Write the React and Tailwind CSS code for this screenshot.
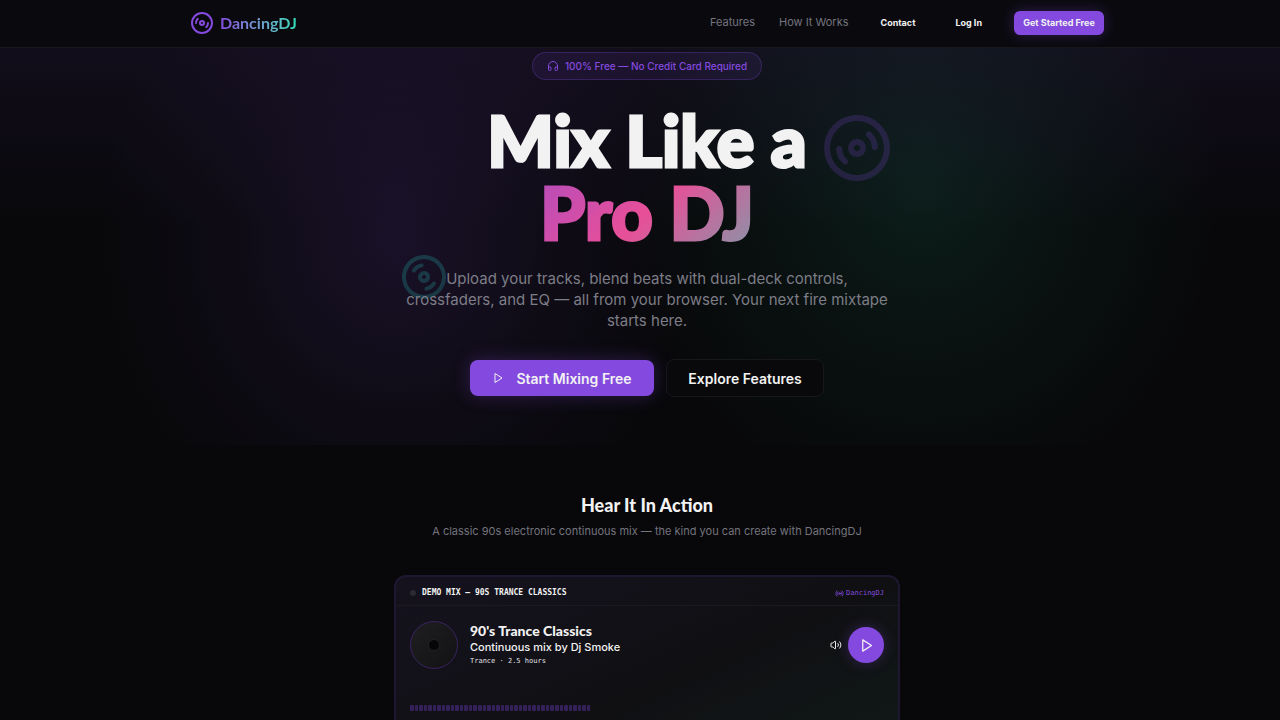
import React, { useState } from "react";
import { Disc3, Headphones, Radio, Volume2 } from "lucide-react";

const navLinks = [
  { label: "Features", href: "#features" },
  { label: "How It Works", href: "#how-it-works" },
];

const bars = Array.from({ length: 40 }, (_, i) => i);

const PlayIcon = ({ size }) => (
  <svg
    width={size}
    height={size}
    viewBox="0 0 24 24"
    fill="none"
    stroke="currentColor"
    strokeWidth="2"
    strokeLinejoin="round"
    aria-hidden="true"
  >
    <polygon points="6 3 20 12 6 21 6 3" />
  </svg>
);

const Navbar = () => (
  <header className="h-12 pb-0.5 pl-[14px] border-b border-[#18181b] bg-[#0a0a0e]">
    <div className="h-full max-w-[914px] mx-auto flex items-center justify-between">
      <a href="#" className="flex items-center gap-1.5">
        <Disc3 size={24} className="text-[#844adf]" />
        <span className="font-['Lato',sans-serif] text-[16px] font-bold leading-5 bg-linear-to-r from-[#844adf] to-[#2adbb8] bg-clip-text text-transparent">
          DancingDJ
        </span>
      </a>
      <nav className="flex items-center text-[9px] font-bold text-[#f2f2f2]">
        <div className="flex items-center gap-6 mr-8 text-[11px] font-normal text-[#74747e]">
          {navLinks.map((link) => (
            <a key={link.label} href={link.href}>
              {link.label}
            </a>
          ))}
        </div>
        <a href="#contact" className="mr-10">
          Contact
        </a>
        <a href="#login" className="mr-8">
          Log In
        </a>
        <a
          href="#signup"
          className="h-6 w-[90px] flex items-center justify-center rounded-md bg-[#844adf] shadow-[0_0_14px_rgba(132,74,223,0.3)]"
        >
          Get Started Free
        </a>
      </nav>
    </div>
  </header>
);

const Hero = () => (
  <section className="relative pt-1 pb-12 pl-[14px] bg-[radial-gradient(ellipse_300px_330px_at_31%_48%,rgba(132,74,223,0.14),rgba(132,74,223,0.05)_55%,transparent),radial-gradient(ellipse_300px_320px_at_72%_36%,rgba(42,219,160,0.1),rgba(42,219,160,0.04)_55%,transparent),linear-gradient(to_bottom,rgba(132,74,223,0.08),transparent_45%)]">
    <div className="relative max-w-[504px] mx-auto flex flex-col items-center text-center">
      {/* Floating discs */}
      <Disc3
        size={72}
        className="absolute right-[6px] top-[60px] rotate-[-48deg] text-[#844adf] opacity-20"
      />
      <Disc3
        size={48}
        className="absolute left-[5px] top-[201px] rotate-[33deg] text-[#2adbd0] opacity-20"
      />

      <div className="h-7 px-3.5 flex items-center gap-1.5 rounded-full border border-[#844adf]/25 bg-[#844adf]/10 text-[10px] font-medium text-[#844adf]">
        <Headphones size={12} />
        100% Free — No Credit Card Required
      </div>

      <h1 className="relative mt-6 w-full font-['Lato',sans-serif] text-[70px] leading-[72px] font-black text-[#f2f2f2] [-webkit-text-stroke:3px_currentColor]">
        <span className="block">Mix Like a</span>
        <span className="block text-[72px] bg-linear-[135deg] from-[#844adf] via-[#e84f98] to-[#2adbb8] bg-clip-text text-transparent">
          Pro DJ
        </span>
      </h1>

      <p className="relative mt-5 max-w-[490px] text-[15px] leading-[21px] text-[#7d7d87]">
        Upload your tracks, blend beats with dual-deck controls, crossfaders,
        and EQ — all from your browser. Your next fire mixtape starts here.
      </p>

      <div className="mt-7 flex items-center gap-3 text-[14px] font-semibold text-[#f2f2f2]">
        <a
          href="#signup"
          className="h-9 w-[184px] flex items-center justify-center gap-3 rounded-lg bg-[#844adf] shadow-[0_0_18px_rgba(132,74,223,0.3)]"
        >
          <PlayIcon size={12} />
          Start Mixing Free
        </a>
        <a
          href="#features"
          className="h-[38px] w-[158px] flex items-center justify-center rounded-lg border border-[#18181b] bg-[#09090b]"
        >
          Explore Features
        </a>
      </div>
    </div>
  </section>
);

const DemoPlayer = () => {
  const [playing, setPlaying] = useState(false);

  return (
    <div className="w-full max-w-[506px] mt-9 pb-24 rounded-xl border-2 border-[#1f1731] bg-linear-to-br from-[#15121e] via-[#101013] to-[#101c1a] text-[#f2f2f2]">
      <div className="h-[29px] pt-1 px-3.5 flex items-center justify-between border-b border-[#1b1a20] font-['DejaVu_Sans_Mono',monospace]">
        <div className="flex items-center gap-1.5 text-[8px] font-bold">
          <span className="size-1.5 rounded-full bg-[#2b2a32]" />
          DEMO MIX — 90S TRANCE CLASSICS
        </div>
        <div className="flex items-center gap-0.5 text-[7px] text-[#844adf]">
          <Radio size={9} />
          DancingDJ
        </div>
      </div>

      <div className="pt-[15px] px-3.5 flex items-center">
        <div className="size-12 flex items-center justify-center rounded-full border border-[#38235f] bg-linear-to-br from-[#1f1f22] to-[#121214]">
          <span className="size-3 rounded-full border border-[#222226] bg-[#060608]" />
        </div>
        <div className="ml-3 flex-1">
          <h3 className="font-['Lato',sans-serif] text-[14px] leading-4 font-black">
            90's Trance Classics
          </h3>
          <p className="text-[11px] leading-4 font-medium">
            Continuous mix by Dj Smoke
          </p>
          <p className="font-['DejaVu_Sans_Mono',monospace] text-[7px] leading-3 text-[#e0e0e4]">
            Trance · 2.5 hours
          </p>
        </div>
        <button type="button" aria-label="Volume" className="mr-1.5">
          <Volume2 size={12} />
        </button>
        <button
          type="button"
          aria-label={playing ? "Pause" : "Play"}
          onClick={() => setPlaying(!playing)}
          className="size-9 flex items-center justify-center rounded-full bg-[#844adf] shadow-[0_0_14px_rgba(132,74,223,0.3)]"
        >
          <PlayIcon size={15} />
        </button>
      </div>

      {/* Level meter */}
      <div className="mt-9 ml-3.5 w-[180px] h-1.5 flex gap-px">
        {bars.map((bar) => (
          <span key={bar} className="flex-1 rounded-[1px] bg-[#352159]" />
        ))}
      </div>
    </div>
  );
};

const App = () => (
  <div className="h-screen overflow-hidden bg-[#08080a] font-['Inter',sans-serif]">
    <Navbar />
    <Hero />
    <section className="pt-12 pl-[14px] flex flex-col items-center text-center">
      <h2 className="font-['Lato',sans-serif] text-[18px] leading-6 font-black text-[#f2f2f2]">
        Hear It In Action
      </h2>
      <p className="mt-1.5 text-[11px] leading-4 text-[#74747e]">
        A classic 90s electronic continuous mix — the kind you can create with
        DancingDJ
      </p>
      <div className="w-full flex justify-center text-left">
        <DemoPlayer />
      </div>
    </section>
  </div>
);

export default App;
